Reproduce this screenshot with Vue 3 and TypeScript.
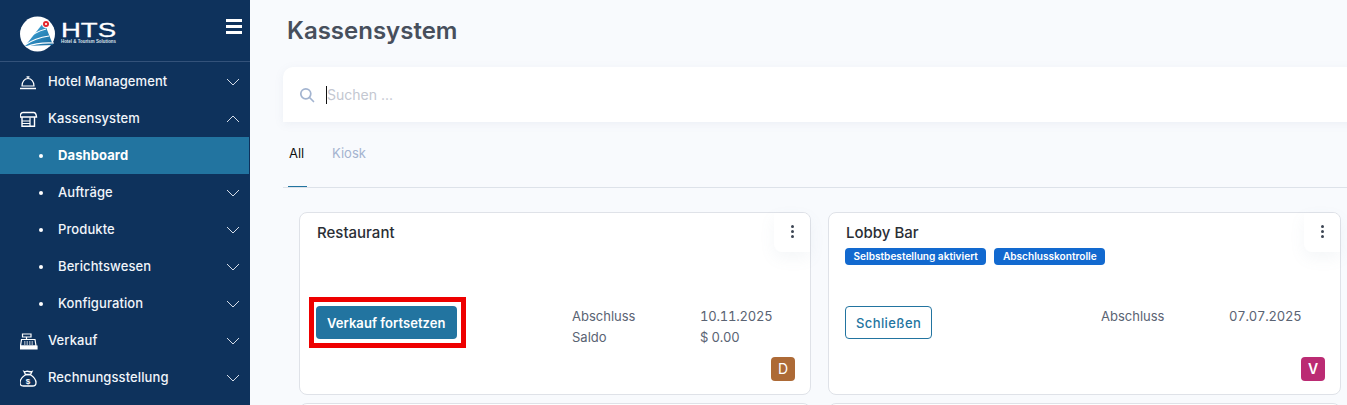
<script setup lang="ts">
type NavItem = {
  label: string
  icon?: 'bell' | 'store' | 'register' | 'bag'
  open?: boolean
  active?: boolean
  noArrow?: boolean
}

const nav: NavItem[] = [
  { label: 'Hotel Management', icon: 'bell' },
  { label: 'Kassensystem', icon: 'store', open: true },
  { label: 'Dashboard', active: true, noArrow: true },
  { label: 'Aufträge' },
  { label: 'Produkte' },
  { label: 'Berichtswesen' },
  { label: 'Konfiguration' },
  { label: 'Verkauf', icon: 'register' },
  { label: 'Rechnungsstellung', icon: 'bag' },
]
</script>

<template>
  <div class="page">
    <aside class="sidebar">
      <div class="brand">
        <svg class="logo" width="100" height="38" viewBox="0 0 100 38">
          <defs>
            <linearGradient id="rays" x1="0" y1="0" x2="1" y2="1">
              <stop offset="0" stop-color="#49b4e6" />
              <stop offset="1" stop-color="#16679c" />
            </linearGradient>
          </defs>
          <circle cx="17.500" cy="18" r="17.500" fill="#fff" />
          <path d="M24 6 L5 30 L33 29 Z" fill="url(#rays)" />
          <path d="M5 25 Q14 16 26 13M5 29 Q15 22 29 20M6 31 Q18 26 34 27" fill="none" stroke="#fff" stroke-width="1.200" />
          <circle cx="26" cy="8" r="4" fill="#fff" />
          <circle cx="26" cy="8" r="3" fill="#e4252c" />
          <circle cx="26" cy="8" r="1.100" fill="#fff" />
          <text x="41" y="21" class="logo-big" textLength="55" lengthAdjust="spacingAndGlyphs">HTS</text>
          <text x="41" y="27" class="logo-small" textLength="55" lengthAdjust="spacingAndGlyphs">Hotel &amp; Tourism Solutions</text>
        </svg>
        <div class="burger"><i></i><i></i><i></i></div>
      </div>

      <nav class="menu">
        <div
          v-for="item in nav"
          :key="item.label"
          class="row"
          :class="{ active: item.active, child: !item.icon }"
        >
          <span v-if="!item.icon" class="dot"></span>
          <svg v-else class="ico" width="18" height="18" viewBox="1 0 18 18" fill="none" stroke="#fff" stroke-width="1.200">
            <template v-if="item.icon === 'bell'">
              <path d="M1 15.500h16" stroke-width="1.500" />
              <path d="M3 13c0-4.400 2.600-7.500 6-7.500s6 3.100 6 7.500z" />
              <path d="M7.500 3.800h3M9 3.800v1.700" />
            </template>
            <template v-else-if="item.icon === 'store'">
              <path d="M4 2.500h10.500c1.600 0 2.800 2 3 4.500H1c.2-2.500 1.400-4.500 3-4.500z" stroke-width="1.400" />
              <path d="M3 7v9.300h12.500V7" stroke-width="1.400" />
              <path d="M3 11h8M3 13.500h8M11 7.500v8.800" />
            </template>
            <template v-else-if="item.icon === 'register'">
              <path d="M3.500 2h8.500v3H3.500zM7.500 5v2.500" />
              <path d="M2.500 7.500h13.500l1 6.500H1.500z" />
              <path d="M5 10h9M5 12h9" stroke-dasharray="1.500 1" />
              <path d="M1 14h17v3H1z" fill="#fff" />
            </template>
            <template v-else>
              <path d="M6.500 5.500 5 2.500c1.500.7 2.500-.5 4-.2s2.500.8 4 .2l-1.500 3z" stroke-width="1.300" />
              <path d="M6.500 5.700c-3 2-5.500 5.200-5.500 8 0 2 1.500 3.300 3.500 3.300h9c2 0 3.500-1.300 3.500-3.300 0-2.800-2.500-6-5.500-8z" stroke-width="1.300" />
              <text x="9" y="14.500" class="bag-sign">$</text>
            </template>
          </svg>
          <span class="label">{{ item.label }}</span>
          <svg v-if="!item.noArrow" class="chev" :class="{ up: item.open }" width="14" height="8" viewBox="0 0 14 8" fill="none" stroke="#d5dde8" stroke-width="1">
            <path d="M1 1l6 6 6-6" />
          </svg>
        </div>
      </nav>
    </aside>

    <main class="main">
      <div class="content">
        <h1>Kassensystem</h1>

        <div class="search">
          <svg width="16" height="16" viewBox="0 0 16 16" fill="none" stroke="#a3b4d0" stroke-width="1.700">
            <circle cx="6.800" cy="6.800" r="5" />
            <path d="M10.500 10.500 14.500 14.500" stroke-linecap="round" />
          </svg>
          <span class="caret"></span>
          <span class="placeholder">Suchen ...</span>
        </div>

        <div class="tabs">
          <span class="tab current">All</span>
          <span class="tab">Kiosk</span>
        </div>

        <div class="cards">
          <section class="card">
            <h2>Restaurant</h2>
            <div class="tags"></div>
            <button class="kebab" type="button"><i></i><i></i><i></i></button>
            <div class="body">
              <div class="cta">
                <button class="btn solid" type="button">Verkauf fortsetzen</button>
                <span class="mark"></span>
              </div>
              <dl class="info">
                <dt>Abschluss</dt><dd>10.11.2025</dd>
                <dt>Saldo</dt><dd>$ 0.00</dd>
              </dl>
            </div>
            <span class="avatar brown">D</span>
          </section>

          <section class="card">
            <h2>Lobby Bar</h2>
            <div class="tags">
              <span class="tag">Selbstbestellung aktiviert</span>
              <span class="tag">Abschlusskontrolle</span>
            </div>
            <button class="kebab" type="button"><i></i><i></i><i></i></button>
            <div class="body">
              <div class="cta">
                <button class="btn outline" type="button">Schließen</button>
              </div>
              <dl class="info">
                <dt>Abschluss</dt><dd>07.07.2025</dd>
              </dl>
            </div>
            <span class="avatar pink">V</span>
          </section>

          <section class="card"></section>
          <section class="card"></section>
        </div>
      </div>
    </main>
  </div>
</template>

<style>
html, body {
  margin: 0;
  overflow: hidden;
}
</style>

<style scoped>
.page {
  display: flex;
  width: 1347px;
  height: 405px;
  overflow: hidden;
  background: #f8fafd;
  font-family: Inter, "Liberation Sans", sans-serif;
}

.sidebar {
  flex: 0 0 250px;
  background: #0e325c;
  color: #fff;
}

.brand {
  height: 62px;
  box-sizing: border-box;
  border-bottom: 1px solid #33527a;
  padding: 16px 8px 0 20px;
  display: flex;
  justify-content: space-between;
  align-items: flex-start;
}

.logo {
  display: block;
}

.logo-big {
  font: 400 20px "Liberation Sans", sans-serif;
  fill: #fff;
  stroke: #fff;
  stroke-width: 0.3px;
}

.logo-small {
  font: 700 4.500px "Liberation Sans", sans-serif;
  fill: #dbe3ec;
}

.bag-sign {
  font: 700 8px "Liberation Sans", sans-serif;
  fill: #fff;
  stroke: none;
  text-anchor: middle;
}

.burger {
  width: 16px;
  margin-top: 3px;
  display: grid;
  gap: 3px;
}

.burger i {
  display: block;
  height: 3px;
  background: #fff;
}

.menu {
  padding-top: 1px;
}

.row {
  height: 37px;
  display: flex;
  align-items: center;
  padding: 0 10px 0 20px;
  font-size: 13px;
  letter-spacing: 0.1px;
  font-weight: 500;
  color: #f1f5fa;
}

.row.active {
  background: #2274a0;
  font-weight: 700;
  color: #fff;
  margin-right: 1px;
}

.ico {
  flex: none;
  width: 18px;
  margin-right: 10px;
}

.dot {
  flex: none;
  width: 4px;
  height: 4px;
  margin: 0 15px 0 19px;
  border-radius: 50%;
  background: #fff;
}

.label {
  flex: 1;
  padding-bottom: 2px;
}

.chev.up {
  transform: rotate(180deg);
}

.main {
  flex: 1;
  min-width: 0;
  overflow: hidden;
}

.content {
  width: 1075px;
  margin-left: 33px;
}

h1 {
  margin: 0;
  padding: 15px 0 0 4px;
  height: 67px;
  box-sizing: border-box;
  font-size: 24px;
  line-height: 32px;
  font-weight: 600;
  color: #474f5c;
}

.search {
  height: 55px;
  display: flex;
  align-items: center;
  padding-left: 16px;
  background: #fff;
  border-radius: 10px 10px 0 0;
  box-shadow: 0 2px 10px rgba(120, 135, 165, 0.09);
}

.caret {
  width: 1px;
  height: 18px;
  margin-left: 11px;
  background: #111;
}

.placeholder {
  font-size: 14px;
  color: #c3c7d1;
}

.tabs {
  height: 66px;
  box-sizing: border-box;
  display: flex;
  gap: 25px;
  padding: 23px 0 0 6px;
  border-bottom: 1px solid #dde2e9;
}

.tab {
  position: relative;
  height: 42px;
  box-sizing: border-box;
  font-size: 13px;
  line-height: 16px;
  color: #a4b3cf;
}

.tab.current {
  color: #111;
  width: 18px;
}

.tab.current::after {
  content: "";
  position: absolute;
  left: -1px;
  right: 0;
  bottom: 0;
  height: 1px;
  background: #2274a0;
}

.cards {
  display: grid;
  grid-template-columns: 512px 513px;
  gap: 8px 17px;
  padding: 24px 0 0 16px;
}

.card {
  position: relative;
  height: 183px;
  box-sizing: border-box;
  padding: 10px 17px 0;
  background: #fff;
  border: 1px solid #dfe2e8;
  border-radius: 8px;
}

h2 {
  margin: 0;
  font-size: 15px;
  line-height: 20px;
  font-weight: 500;
  color: #2a2e35;
}

.tags {
  display: flex;
  gap: 8px;
  height: 17px;
  margin: 5px 0 0 -1px;
}

.tag {
  padding: 0 8.500px;
  border-radius: 4px;
  background: #1269cf;
  color: #fff;
  font-size: 10.100px;
  line-height: 17px;
  font-weight: 600;
}

.kebab {
  position: absolute;
  top: 0;
  right: 0;
  width: 36px;
  height: 39px;
  padding: 12px 0 0;
  border: 0;
  border-radius: 0 7px 0 8px;
  background: #fff;
  box-shadow: 0 6px 16px rgba(120, 135, 165, 0.08);
  display: flex;
  flex-direction: column;
  align-items: center;
  gap: 2px;
}

.kebab i {
  width: 3px;
  height: 3px;
  border-radius: 50%;
  background: #3d4654;
}

.body {
  display: grid;
  grid-template-columns: 255px 1fr;
  margin-top: 41px;
}

.cta {
  position: relative;
  justify-self: start;
  align-self: start;
  margin-left: -1px;
}

.btn {
  display: block;
  height: 33px;
  box-sizing: border-box;
  border-radius: 4px;
  font-family: inherit;
  font-size: 13px;
  font-weight: 600;
  letter-spacing: 0.05px;
  padding: 0 11px;
}

.btn.solid {
  background: #2274a0;
  border: 0;
  color: #fff;
}

.btn.outline {
  background: #fff;
  border: 1px solid #2274a0;
  color: #2274a0;
  font-weight: 500;
  letter-spacing: 0.4px;
  padding: 0 10px;
}

.mark {
  position: absolute;
  inset: -9px -9px -9px -7px;
  border: 5px solid #ee0000;
}

.info {
  display: grid;
  grid-template-columns: 128px 1fr;
  grid-auto-rows: 21px;
  align-items: center;
  margin: -1px 0 0;
  font-size: 13px;
  color: #5a6373;
}

.info dt, .info dd {
  margin: 0;
}

.info dd {
  font-variant-numeric: tabular-nums;
  letter-spacing: -0.2px;
}

.avatar {
  position: absolute;
  right: 15px;
  bottom: 13px;
  width: 24px;
  height: 24px;
  border-radius: 4px;
  color: #fff;
  font-size: 14px;
  line-height: 24px;
  text-align: center;
}

.brown {
  background: #ad6a36;
}

.pink {
  background: #bb2b73;
  font-weight: 600;
}
</style>
